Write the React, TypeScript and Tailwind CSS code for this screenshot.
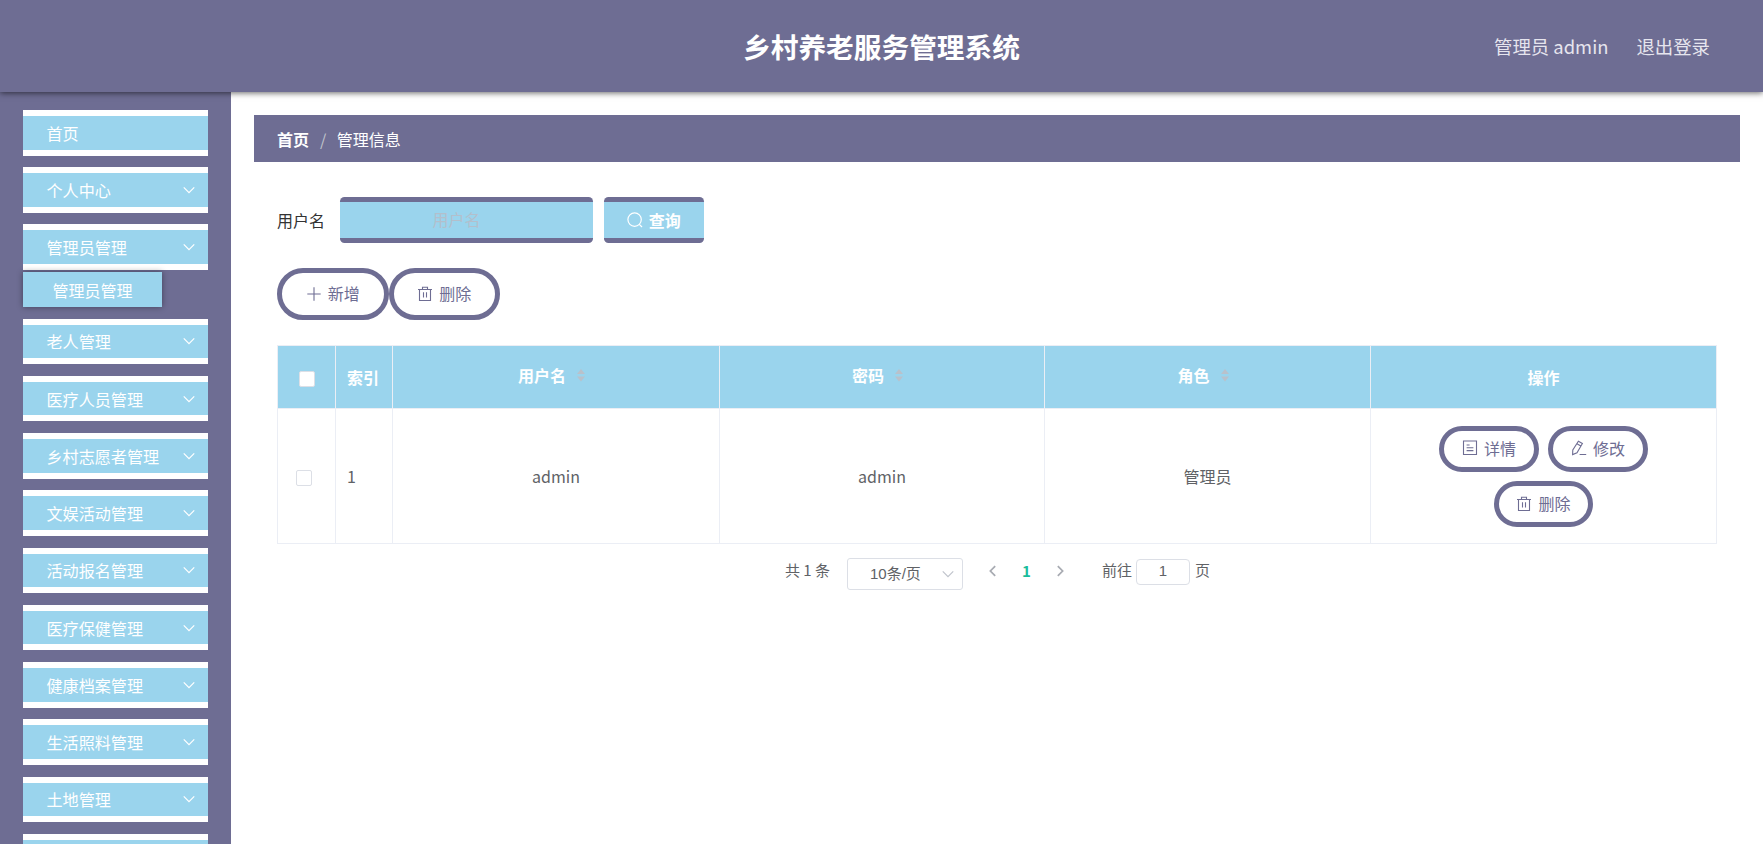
import React from "react";

const menuBefore = ["个人中心", "管理员管理"];
const menuAfter = [
  "老人管理", "医疗人员管理", "乡村志愿者管理", "文娱活动管理", "活动报名管理",
  "医疗保健管理", "健康档案管理", "生活照料管理", "土地管理",
];

function Icon({ size = 16, sw = 1, className = "", children }: { size?: number; sw?: number; className?: string; children: React.ReactNode }) {
  return (
    <svg width={size} height={size} viewBox="0 0 16 16" fill="none" stroke="currentColor" strokeWidth={sw} className={"shrink-0 " + className}>
      {children}
    </svg>
  );
}

const TrashIcon = () => (
  <Icon sw={1.1}>
    <path d="M1 3.5h14M5.5 3.5V1.2h5v2.3M2.5 3.5v11h11v-11M6.5 6.3v5.2M9.5 6.3v5.2" />
  </Icon>
);
const PlusIcon = () => (
  <Icon sw={1.1}>
    <path d="M8 1.3v13.4M1.3 8h13.4" />
  </Icon>
);
const SearchIcon = () => (
  <Icon sw={1.2}>
    <circle cx="7.6" cy="7.6" r="6.7" />
    <path d="M12.3 12.3l2.7 2.7" />
  </Icon>
);
const DocIcon = () => (
  <Icon sw={1.1}>
    <path d="M1.5 1h13v13.5h-13zM4.6 5h3M4.6 7.8h6.8M4.6 10.6h6.8" />
  </Icon>
);
const EditIcon = () => (
  <Icon sw={1.1}>
    <path d="M7.4 1.2l4 2.3-5.4 9.3-4.400 1.800.2-4.600zM5.9 3.800l4 2.300M8.600 14.500h6.600" />
  </Icon>
);
const Chevron = ({ className }: { className: string }) => (
  <Icon size={14} sw={1.4} className={className}>
    <path d="M2 5l6 6 6-6" />
  </Icon>
);

function MenuItem({ label, arrow = true }: { label: string; arrow?: boolean }) {
  return (
    <div className="mb-[11.74px] flex h-[45.5px] shrink-0 items-center justify-between border-y-6 border-white bg-[#9ad4ed] pr-[12px] pl-[23.5px] text-[16.1px] text-white">
      <span>{label}</span>
      {arrow && <Chevron className="text-white" />}
    </div>
  );
}

function Pill({ icon, label, big = false }: { icon: React.ReactNode; label: string; big?: boolean }) {
  return (
    <button
      className={
        "flex items-center justify-center gap-[6px] rounded-full border-5 border-[#6e6d93] bg-white pb-px text-[16px] leading-none text-[#6e6d93] " +
        (big ? "h-[52px] w-[111.5px]" : "h-[46px] w-[99.5px]")
      }
    >
      {icon}
      <span className="-mt-px">{label}</span>
    </button>
  );
}

function SortHead({ label }: { label: string }) {
  return (
    <div className="flex items-center justify-center gap-[11px] border-r border-[#ebeef5] pr-[9px] pb-[5px]">
      <span>{label}</span>
      <svg width="8" height="14" viewBox="0 0 8 14" fill="#b9c1cb">
        <path d="M4 1l4 5H0zM4 13.5l4-5H0z" />
      </svg>
    </div>
  );
}

const cols = "grid grid-cols-[58px_57px_327px_325px_326px_346px]";

export default function App() {
  return (
    <div className="flex h-[844px] w-[1763px] flex-col overflow-hidden bg-white font-['Noto_Sans_CJK_SC',sans-serif] text-[16px]">
      <header className="relative z-10 grid h-[92px] shrink-0 grid-cols-[1fr_auto_1fr] items-center bg-[#6e6d93] pt-[2px] shadow-[0_1px_6px_rgba(0,0,0,0.6)]">
        <span />
        <h1 className="text-[27.7px] font-bold text-white">乡村养老服务管理系统</h1>
        <div className="flex justify-end gap-[28px] pr-[53px] text-[18.4px] text-[#e6e5ee]">
          <span>管理员 admin</span>
          <span>退出登录</span>
        </div>
      </header>
      <div className="flex min-h-0 flex-1">
        <aside className="flex w-[231px] shrink-0 flex-col overflow-hidden bg-[#6e6d93] pt-[18px] pr-[23px] pl-[23px]">
          <MenuItem label="首页" arrow={false} />
          {menuBefore.map((m) => (
            <MenuItem key={m} label={m} />
          ))}
          <div className="-mt-[9.5px] mb-[11.5px] flex h-[35px] w-[139px] shrink-0 items-center justify-center bg-[#9ad4ed] text-white shadow-[0_0_6px_rgba(0,0,0,0.4)]">
            管理员管理
          </div>
          {menuAfter.map((m) => (
            <MenuItem key={m} label={m} />
          ))}
          <MenuItem label="" arrow={false} />
        </aside>
        <main className="flex flex-1 flex-col pt-[23px] pr-[23px] pl-[23px]">
          <nav className="flex h-[47px] shrink-0 items-center bg-[#6e6d93] pl-[23px] text-white">
            <b>首页</b>
            <span className="mr-[10.5px] ml-[11px] text-[#c0c4cc]">/</span>
            <span>管理信息</span>
          </nav>
          <div className="mt-[35px] flex h-[46px] items-center pl-[23px]">
            <label className="w-[62.5px] pb-px text-[#333]">用户名</label>
            <div className="flex h-[46px] w-[253px] items-center rounded-[4.5px] border-y-[5px] border-[#6e6d93] bg-[#9ad4ed] pb-[2px] pl-[93px] text-[#b3bfcc]">
              用户名
            </div>
            <button className="ml-[11px] flex h-[46px] w-[100.5px] items-center justify-center gap-[6px] rounded-[4.5px] border-y-[5px] border-[#6e6d93] bg-[#9ad4ed] font-bold text-white">
              <SearchIcon />
              查询
            </button>
          </div>
          <div className="mt-[25px] flex pl-[23px]">
            <Pill big icon={<PlusIcon />} label="新增" />
            <Pill big icon={<TrashIcon />} label="删除" />
          </div>
          <section className="mt-[25px] ml-[23px] w-[1440px] border-t border-l border-[#ebeef5] text-[#606266]">
            <div className={cols + " h-[63px] border-b border-[#ebeef5] bg-[#9ad4ed] font-bold text-white"}>
              <div className="flex items-center justify-center border-r border-[#ebeef5] pt-[4px]">
                <span className="size-[16px] rounded-[2px] border border-[#dcdfe6] bg-white" />
              </div>
              <div className="flex items-center border-r border-[#ebeef5] pl-[11px]">索引</div>
              <SortHead label="用户名" />
              <SortHead label="密码" />
              <SortHead label="角色" />
              <div className="flex items-center justify-center border-r border-[#ebeef5]">操作</div>
            </div>
            <div className={cols + " h-[135px] border-b border-[#ebeef5]"}>
              <div className="flex items-center border-r border-[#ebeef5] pt-[3px] pl-[18px]">
                <span className="size-[16px] rounded-[2px] border border-[#dcdfe6] bg-white" />
              </div>
              <div className="flex items-center border-r border-[#ebeef5] pb-px pl-[11px]">1</div>
              <div className="flex items-center justify-center border-r border-[#ebeef5] pb-px">admin</div>
              <div className="flex items-center justify-center border-r border-[#ebeef5] pb-px">admin</div>
              <div className="flex items-center justify-center border-r border-[#ebeef5] pb-px">管理员</div>
              <div className="flex flex-wrap content-center justify-center gap-[9.5px] border-r border-[#ebeef5] px-[60px] pt-px">
                <Pill icon={<DocIcon />} label="详情" />
                <Pill icon={<EditIcon />} label="修改" />
                <Pill icon={<TrashIcon />} label="删除" />
              </div>
            </div>
          </section>
          <footer className="mt-[11px] flex h-[36px] items-center pl-[531px] text-[15px] text-[#606266]">
            <span className="w-[62px] pb-[5px]">共 1 条</span>
            <div className="mt-[2px] flex h-[32px] w-[116px] items-center justify-between rounded-[3px] border border-[#dcdfe6] pr-[7px] pl-[22px] font-['Liberation_Sans','Noto_Sans_CJK_SC',sans-serif]">
              <span>10条/页</span>
              <Chevron className="text-[#c0c4cc]" />
            </div>
            <div className="mb-[4px] ml-[23px] flex items-center text-[#a8abb2]">
              <Icon size={14} sw={2}><path d="M10.5 2.5L5 8l5.5 5.5" /></Icon>
              <b className="w-[53px] text-center text-[#1abc9c]">1</b>
              <Icon size={14} sw={2}><path d="M5.5 2.5L11 8l-5.5 5.5" /></Icon>
            </div>
            <span className="mb-[5px] ml-[35px]">前往</span>
            <div className="mr-[5px] ml-[4px] mb-[3px] flex h-[26px] w-[54px] items-center justify-center rounded-[4px] border border-[#dcdfe6] font-['Liberation_Sans',sans-serif]">1</div>
            <span className="mb-[5px]">页</span>
          </footer>
        </main>
      </div>
    </div>
  );
}
